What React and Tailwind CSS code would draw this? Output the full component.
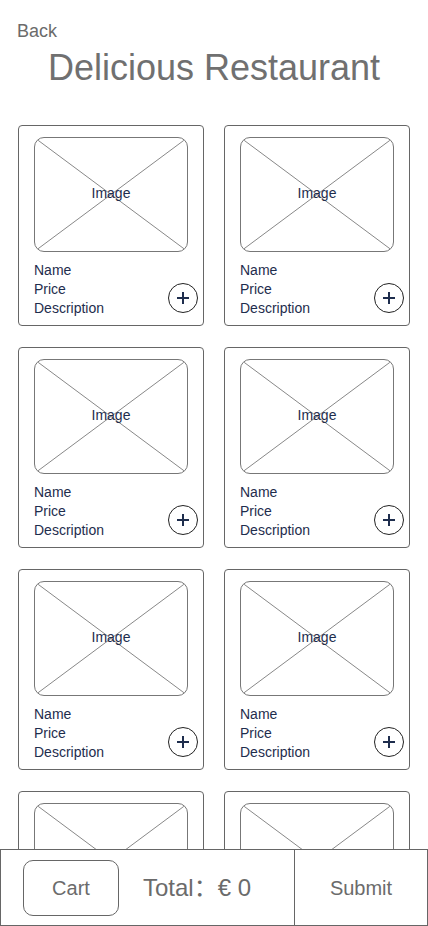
const ITEMS = [1, 2, 3, 4, 5, 6, 7, 8];

function PlusButton() {
  return (
    <button className="absolute right-[5px] bottom-[12px] w-[30px] h-[30px] rounded-full border border-[#222] bg-white flex items-center justify-center">
      <svg width="14" height="14" viewBox="0 0 14 14">
        <path d="M7 1v12M1 7h12" stroke="#1e2d4d" strokeWidth="2" />
      </svg>
    </button>
  );
}

function MenuCard() {
  return (
    <div className="relative h-[201px] rounded-[4px] border border-[#666] bg-white pt-[11px] px-[15px]">
      {/* placeholder image */}
      <div className="relative h-[115px] rounded-[10px] border border-[#777] overflow-hidden flex items-center justify-center">
        <svg
          className="absolute inset-0 w-full h-full"
          viewBox="0 0 100 100"
          preserveAspectRatio="none"
        >
          <line x1="0" y1="0" x2="100" y2="100" stroke="#888" strokeWidth="1" vectorEffect="non-scaling-stroke" />
          <line x1="100" y1="0" x2="0" y2="100" stroke="#888" strokeWidth="1" vectorEffect="non-scaling-stroke" />
        </svg>
        <span className="relative text-[14px] text-[#1e2d4d] -mt-[3px]">Image</span>
      </div>
      <div className="mt-[9px] text-[14px] leading-[19px] text-[#1e2d4d]">
        <p>Name</p>
        <p>Price</p>
        <p>Description</p>
      </div>
      <PlusButton />
    </div>
  );
}

export default function App() {
  return (
    <main className="min-h-screen bg-white font-['Liberation_Sans',Arial,sans-serif] pb-[90px]">
      <header className="pt-[21px]">
        <p className="pl-[17px] text-[18px] leading-[20px] text-[#6b6b6b]">Back</p>
        <h1 className="mt-[7px] text-center text-[36px] leading-[40px] text-[#707070]">
          Delicious Restaurant
        </h1>
      </header>

      <div className="mt-[37px] px-[18px] grid grid-cols-2 gap-x-[20px] gap-y-[21px]">
        {ITEMS.map((i) => (
          <MenuCard key={i} />
        ))}
      </div>

      {/* bottom bar */}
      <div className="fixed bottom-0 left-0 right-0 h-[77px] border border-[#666] bg-white flex">
        <div className="w-[294px] border-r border-[#666] flex items-center pl-[22px]">
          <button className="w-[96px] h-[56px] rounded-[10px] border border-[#666] text-[20px] text-[#6b6b6b]">
            Cart
          </button>
          <span className="ml-[24px] text-[24px] text-[#6b6b6b] font-['Liberation_Sans','Noto_Sans_CJK_SC',sans-serif]">
            Total：€ 0
          </span>
        </div>
        <div className="flex-1 flex items-center justify-center text-[20px] text-[#6b6b6b]">
          Submit
        </div>
      </div>
    </main>
  );
}
